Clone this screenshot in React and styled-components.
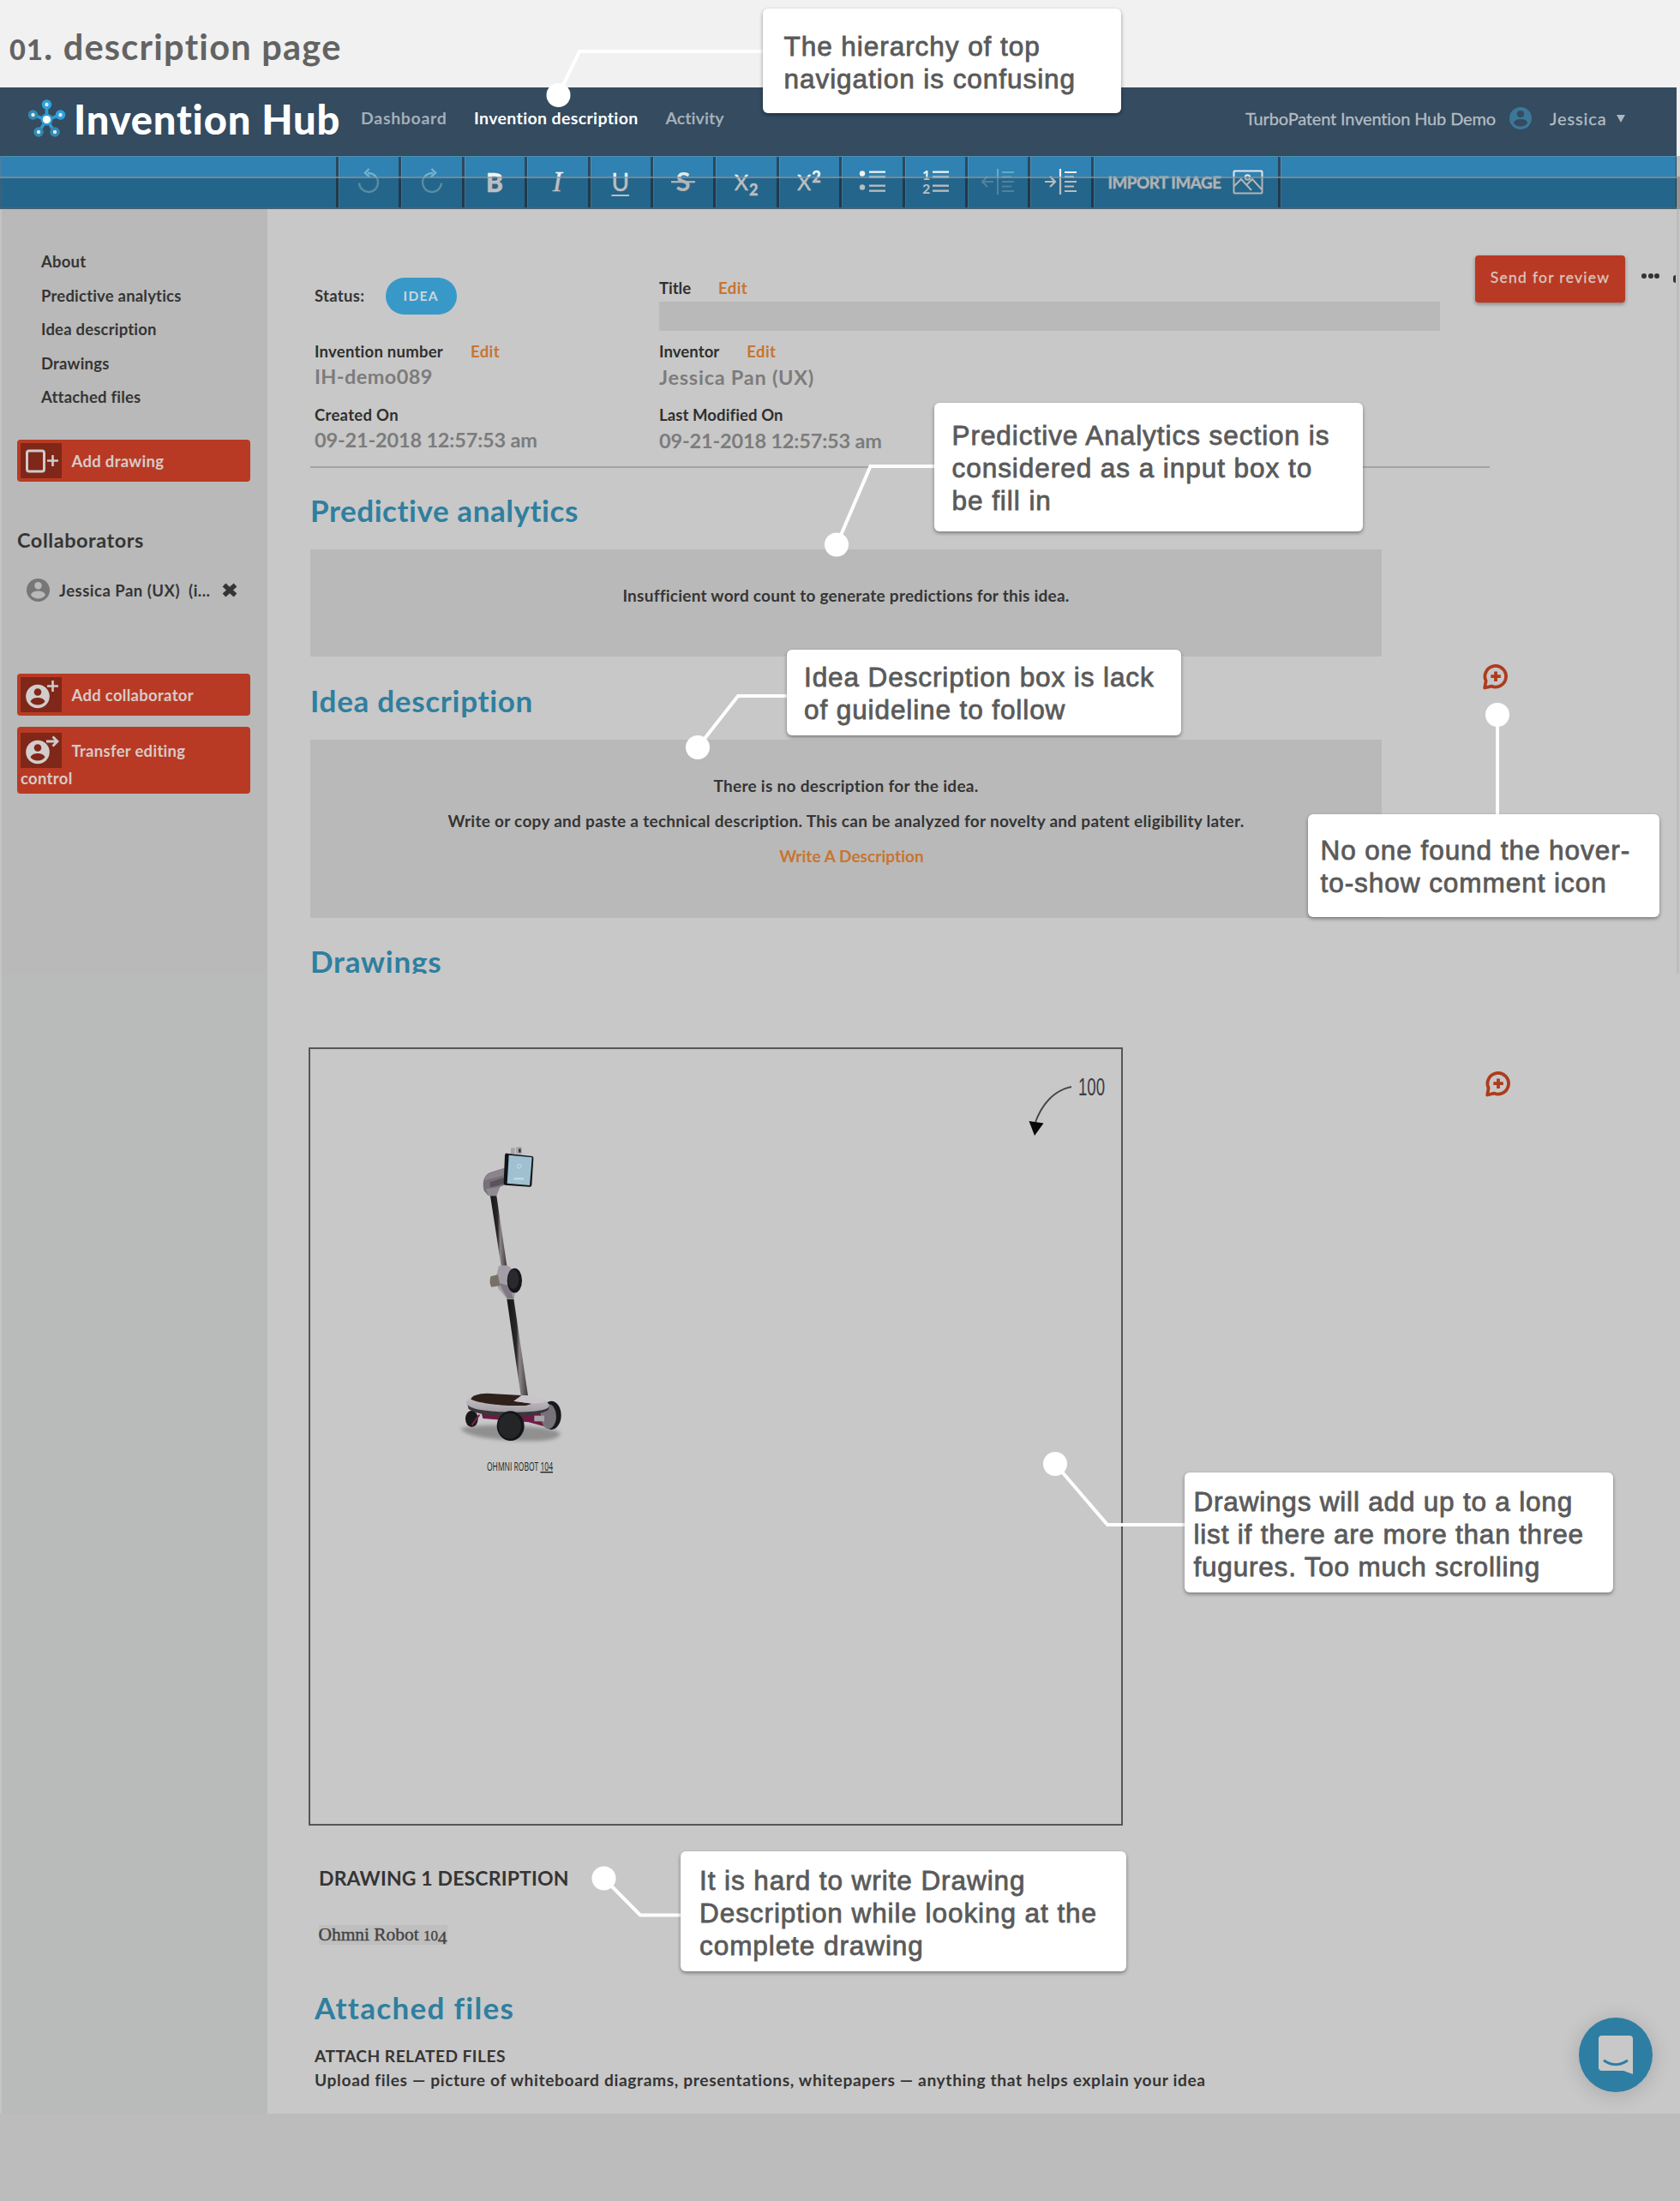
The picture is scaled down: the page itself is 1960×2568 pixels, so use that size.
import React from "react";
import styled, { createGlobalStyle } from "styled-components";

const Global = createGlobalStyle`
  * { box-sizing: border-box; }
  body { margin: 0; background: #bcbcbc; }
`;

const ui = `"Lato", "Open Sans", sans-serif`;

const Page = styled.div`
  position: relative;
  width: 1960px;
  height: 2568px;
  overflow: hidden;
  display: flex;
  flex-direction: column;
  background: #bcbcbc;
  color: #353535;
  font-family: ${ui};
  font-weight: 700;
  font-variant-ligatures: none;
`;

const TitleBar = styled.header`
  height: 102px;
  flex: none;
  background: #f1f1f1;
  padding: 29px 0 0 11px;
`;

const PageTitle = styled.h1`
  margin: 0;
  font-size: 41.5px;
  line-height: 50px;
  font-weight: 700;
  letter-spacing: ${(p) => p.$ls}px;
  color: #636363;
  white-space: nowrap;
`;

const OldStyle = styled.span`
  font-size: ${(p) => p.$size}px;
  font-weight: ${(p) => p.$weight || 400};
`;

const Descending = styled.span`
  position: relative;
  top: 4px;
`;

const TopNav = styled.nav`
  height: 80px;
  flex: none;
  width: 1956px;
  background: #344b60;
  display: flex;
  align-items: center;
  padding: 0 60px 8px 32px;
  box-shadow: 4px 0 0 #f1f1f1;
`;

const Brand = styled.div`
  display: flex;
  align-items: center;
  width: 389px;
`;

const BrandName = styled.span`
  margin-left: 9px;
  padding-top: 2px;
  font-size: 47px;
  line-height: 54px;
  font-weight: 900;
  letter-spacing: ${(p) => p.$ls}px;
  color: #fff;
  white-space: nowrap;
`;

const NavLink = styled.a`
  width: ${(p) => p.$w}px;
  font-size: 19.5px;
  line-height: 24px;
  letter-spacing: ${(p) => p.$ls || 0}px;
  color: ${(p) => (p.$active ? "#fff" : "#a3afb8")};
  white-space: nowrap;
`;

const Account = styled.div`
  margin-left: auto;
  display: flex;
  align-items: center;
  font-size: 20px;
  line-height: 24px;
  font-weight: 400;
  color: #b4bcc2;
  -webkit-text-stroke: 0.3px #b4bcc2;
  white-space: nowrap;
`;

const Org = styled.span`
  width: 308px;
  letter-spacing: ${(p) => p.$ls}px;
`;

const UserName = styled.span`
  margin-left: 21px;
  width: 78px;
  letter-spacing: 0.9px;
`;

const Caret = styled.i`
  border: 5.5px solid transparent;
  border-top: 9px solid #adb6bd;
  border-bottom: 0;
`;

const Toolbar = styled.div`
  position: relative;
  height: 62px;
  flex: none;
  width: 1956px;
  display: flex;
  background: #2f82b2;
  border-top: 1px solid #4a90b4;
  border-left: 2px solid #4a7f9f;
  border-bottom: 2px solid #5b7f92;
  &::after {
    content: "";
    position: absolute;
    left: -2px;
    right: -4px;
    top: 23px;
    bottom: -2px;
    background: rgba(0, 0, 0, 0.22);
    border-top: 2px solid rgba(152, 158, 162, 0.65);
  }
`;

const ToolSpacer = styled.div`
  width: 390px;
`;

const Tool = styled.button`
  width: ${(p) => p.$w || 73.4}px;
  padding: 0 0 1px;
  margin: 0;
  border: 0;
  border-left: 3px solid #2b4960;
  box-shadow: inset 1px 0 0 #4f92b5;
  background: none;
  color: #f2f4f5;
  display: flex;
  align-items: center;
  justify-content: center;
  font-family: ${ui};
`;

const Glyph = styled.span`
  font-size: ${(p) => p.$size || 29}px;
  line-height: 34px;
  font-family: ${(p) => p.$family || ui};
  font-weight: ${(p) => p.$weight || 400};
  font-style: ${(p) => (p.$italic ? "italic" : "normal")};
  text-decoration: ${(p) => p.$line || "none"};
  text-decoration-thickness: 2px;
  text-underline-offset: 4px;
  -webkit-text-stroke: 0.4px #f2f4f5;
  white-space: pre;
  sub, sup { font-size: 18px; line-height: 0; font-weight: 700; margin-left: 1px; }
`;

const ImportLabel = styled.span`
  font-size: 18.8px;
  font-weight: 700;
  letter-spacing: ${(p) => p.$ls}px;
  margin-right: 14px;
  color: #e2e6e8;
  -webkit-text-stroke: 0.4px #e2e6e8;
  white-space: nowrap;
`;

const ToolEnd = styled.div`
  flex: 1;
  border-left: 3px solid #2b4960;
  border-right: 1px solid #2b4960;
  box-shadow: inset 1px 0 0 #4f92b5;
`;

const Body = styled.div`
  display: flex;
  height: 2222px;
  flex: none;
  background: #c8c8c8;
`;

const Sidebar = styled.aside`
  width: 312px;
  flex: none;
  border-left: 2px solid #c4c4c4;
  background: linear-gradient(#b9b9b9 893px, #b8bbb9 893px);
  padding: 42px 20px 0 18px;
`;

const SideLink = styled.a`
  display: block;
  margin-left: 28px;
  height: 39.6px;
  line-height: 39.6px;
  font-size: 18.5px;
  letter-spacing: 0.2px;
`;

const SideTitle = styled.h3`
  margin: 54.5px 0 0;
  font-size: 23.5px;
  line-height: 28px;
  font-weight: 700;
  letter-spacing: ${(p) => p.$ls}px;
`;

const Person = styled.div`
  display: flex;
  align-items: center;
  height: 28px;
  margin: 30.5px 0 83px 11px;
  font-size: 18.5px;
  letter-spacing: ${(p) => p.$ls}px;
  white-space: pre;
  svg:first-child { margin-right: 11px; }
  svg:last-child { margin-left: 13px; }
`;

const RedButton = styled.button`
  display: block;
  width: 272px;
  height: ${(p) => p.$h || 49}px;
  margin: ${(p) => p.$mt || 0}px 0 0;
  padding: 4px;
  border: 0;
  border-radius: 4px;
  background: #b93a24;
  color: #d6cbc8;
  text-align: left;
  font-family: ${ui};
  font-size: 18.5px;
  font-weight: 700;
  letter-spacing: 0.3px;
`;

const ButtonRow = styled.span`
  display: flex;
  align-items: flex-start;
  height: 42px;
  line-height: 43px;
`;

const IconBox = styled.span`
  width: 48px;
  height: 41px;
  margin-right: 11.5px;
  background: #7f2718;
  display: flex;
`;

const WrapWord = styled.span`
  display: block;
  line-height: 24px;
  margin-top: -1px;
`;

const Main = styled.main`
  flex: 1;
  width: 1648px;
  margin-right: 2px;
  padding-left: 50px;
`;

const MetaRow = styled.div`
  display: flex;
  align-items: flex-start;
  height: 300px;
  padding-left: 5px;
`;

const MetaColumn = styled.div`
  width: ${(p) => p.$w}px;
  padding-top: ${(p) => p.$top}px;
`;

const StatusRow = styled.div`
  display: flex;
  align-items: center;
  height: 43px;
  margin-bottom: 30.5px;
  font-size: 18.5px;
`;

const Status = styled.span`
  width: 82.5px;
  padding-bottom: 1px;
  letter-spacing: 0.3px;
`;

const Pill = styled.span`
  width: 83.5px;
  height: 43px;
  border-radius: 22px;
  background: #3899c8;
  color: #c9d7de;
  font-size: 15.5px;
  letter-spacing: 1.3px;
  line-height: 43px;
  text-align: center;
`;

const Label = styled.div`
  display: flex;
  gap: 32px;
  height: 24px;
  line-height: 24px;
  font-size: 18.5px;
  letter-spacing: ${(p) => p.$ls || 0}px;
  color: #2f2f2f;
`;

const EditLink = styled.a`
  color: #c87530;
  letter-spacing: 0.4px;
`;

const Value = styled.div`
  margin: 3.5px 0 18.5px;
  height: 28px;
  line-height: 28px;
  font-size: 23.5px;
  letter-spacing: ${(p) => p.$ls || 0}px;
  color: #7c7c7c;
`;

const TitleField = styled.div`
  height: 34px;
  margin: 3.5px 0 12.5px;
  background: #b9b9b9;
`;

const Actions = styled.div`
  display: flex;
  align-items: center;
  margin: 54px 0 0 41px;
`;

const SendButton = styled.button`
  width: 175px;
  height: 55px;
  padding: 0 0 5px;
  border: 0;
  border-radius: 4px;
  background: #b93a24;
  box-shadow: 0 2px 4px rgba(0, 0, 0, 0.35);
  color: #d9c5bf;
  font-family: ${ui};
  font-size: 17.5px;
  -webkit-text-stroke: 0.3px #d9c5bf;
  letter-spacing: ${(p) => p.$ls}px;
  white-space: nowrap;
`;

const Dots = styled.span`
  display: flex;
  gap: 1.5px;
  margin: 0 16px 7px 19px;
  i { width: 6px; height: 6px; border-radius: 3px; background: #333; }
`;

const EdgeMark = styled.i`
  width: 3px;
  height: 9px;
  border-radius: 3px 0 0 3px;
  background: #3b3226;
`;

const Rule = styled.hr`
  margin: 0;
  border: 0;
  width: 1376px;
  height: 2px;
  background: #a4a4a4;
`;

const Heading = styled.h2`
  margin: ${(p) => p.$m};
  height: ${(p) => p.$h || 40}px;
  overflow: hidden;
  font-size: 35px;
  line-height: 40px;
  font-weight: 700;
  letter-spacing: ${(p) => p.$ls || 0}px;
  color: #2f7f9f;
`;

const WithComment = styled.div`
  display: flex;
  align-items: flex-start;
`;

const CommentButton = styled.span`
  display: flex;
  margin: ${(p) => p.$m};
`;

const Section = styled.section`
  width: 1250px;
`;

const EmptyBox = styled.div`
  width: 1250px;
  height: ${(p) => p.$h}px;
  padding-top: ${(p) => p.$top}px;
  background: #b9b9b9;
  display: flex;
  flex-direction: column;
  align-items: center;
  font-size: 19px;
  line-height: 41px;
`;

const Message = styled.span`
  padding-left: ${(p) => p.$left || 0}px;
  letter-spacing: ${(p) => p.$ls || 0}px;
  color: ${(p) => (p.$link ? "#c87530" : "#353535")};
  white-space: nowrap;
`;

const Canvas = styled.figure`
  width: 950px;
  height: 908px;
  margin: 0 0 0 -2px;
  border: 2px solid #565656;
  svg { display: block; }
`;

const Caption = styled.h4`
  margin: 46.5px 0 0 10px;
  font-size: 23px;
  line-height: 28px;
  letter-spacing: ${(p) => p.$ls}px;
`;

const Note = styled.p`
  margin: 41.5px 0 0 9.5px;
  width: max-content;
  height: 23px;
  background: #bfbfbf;
  font-family: "Liberation Serif", "DejaVu Serif", serif;
  font-weight: 400;
  font-size: 21.5px;
  line-height: 23px;
  letter-spacing: ${(p) => p.$ls}px;
  -webkit-text-stroke: 0.4px #444;
  color: #444;
`;

const FileLine = styled.div`
  margin-left: 5px;
  height: 28px;
  line-height: 28px;
  font-size: 19.2px;
  letter-spacing: ${(p) => p.$ls}px;
  white-space: nowrap;
`;

const Chat = styled.button`
  position: absolute;
  left: 1842px;
  top: 2354px;
  width: 86px;
  height: 87px;
  padding: 0;
  border: 0;
  border-radius: 50%;
  background: #2e7ea4;
  box-shadow: 0 3px 24px rgba(0, 0, 0, 0.16);
`;

const EdgeLine = styled.div`
  position: absolute;
  right: 1px;
  top: 244px;
  width: 3px;
  height: 892px;
  background: #bdbdbd;
`;

const Connectors = styled.svg`
  position: absolute;
  inset: 0;
`;

const Callout = styled.div`
  position: absolute;
  left: ${(p) => p.$x}px;
  top: ${(p) => p.$y}px;
  width: ${(p) => p.$w}px;
  height: ${(p) => p.$h}px;
  padding: ${(p) => p.$pt}px 0 0 ${(p) => p.$pl}px;
  border-radius: 6px;
  background: #fff;
  box-shadow: 0 2px 4px rgba(0, 0, 0, 0.4);
  font-family: "Liberation Sans", Arial, sans-serif;
  font-weight: 400;
  font-size: 31.5px;
  line-height: 38px;
  letter-spacing: ${(p) => p.$ls || 0}px;
  color: #5a5a5a;
  -webkit-text-stroke: 0.8px #5a5a5a;
  white-space: nowrap;
`;

const Logo = () => (
  <svg width="45" height="46" viewBox="0 0 45 46">
    <g stroke="#2f9bd0" strokeWidth="3.6">
      <path d="M22.500 25V7M22.500 25L6.500 19M22.500 25L38.500 19M22.500 25L13 39M22.500 25L32 39" />
    </g>
    <circle cx="22.5" cy="24.500" r="7" fill="#2f9bd0" />
    {[[22.5, 7], [6.5, 19], [38.5, 19], [13, 39], [32, 39]].map(([x, y], i) => (
      <g key={i}>
        <circle cx={x} cy={y} r="5.8" fill={i % 3 === 1 || i === 3 ? "#3388b0" : "#2ea0da"} />
        <circle cx={x} cy={y} r="2.2" fill="#dcebf2" />
      </g>
    ))}
    <circle cx="22.500" cy="24.500" r="4.6" fill="#fff" />
  </svg>
);

const Avatar = ({ size, fill, hole }) => (
  <svg width={size} height={size} viewBox="0 0 26 26">
    <circle cx="13" cy="13" r="13" fill={fill} />
    <circle cx="13" cy="8" r="4.100" fill={hole} />
    <path d="M4.800 18.500C6 14.700 10 14 13 14s7 .7 8.200 4.500C19.500 21 16.500 22.600 13 22.600S6.500 21 4.800 18.500Z" fill={hole} />
  </svg>
);

const Turn = ({ flip }) => (
  <svg width="28" height="32" viewBox="0 0 28 32" fill="none" stroke="#72b3d0" strokeWidth="2.4">
    <g transform={flip ? "translate(28 0) scale(-1 1)" : undefined}>
      <path d="M3 17.500a11 11 0 1 0 10-11.500" />
      <path d="M14.500 1L10 5.800l5.500 5" />
    </g>
  </svg>
);

const StrikeIcon = () => (
  <svg width="30" height="34" viewBox="0 0 30 34">
    <text x="15" y="27.500" textAnchor="middle" fontFamily="Lato" fontSize="31" fontWeight="700" fill="#e6eaec">S</text>
    <path d="M1 17.200h28" stroke="#e6eaec" strokeWidth="2.200" />
  </svg>
);

const ListIcon = ({ numbered }) => (
  <svg width="34" height="32" viewBox="0 0 34 32" fill="#f0f2f3">
    {numbered ? (
      <g fontFamily="Lato" fontWeight="700" fontSize="16">
        <text x="2" y="13.500">1</text>
        <text x="2" y="29.500">2</text>
      </g>
    ) : (
      <>
        <circle cx="6" cy="6.500" r="3.200" />
        <circle cx="6" cy="22.500" r="3.200" />
      </>
    )}
    {[3.5, 9.5, 19.5, 25.5].map((y) => <rect key={y} x="14" y={y} width="19" height="2.300" />)}
  </svg>
);

const IndentIcon = ({ out }) => (
  <svg width="42" height="32" viewBox="0 0 42 32" fill="none" stroke={out ? "#64a8c9" : "#eef1f2"} strokeWidth="2.200">
    {out ? <path d="M16 16H3M9 10l-6 6 6 6" /> : <path d="M3 16h12M9 10l6 6-6 6" />}
    <path d="M21 1v30M26 5h14M26 10.500h11M26 16h14M26 21.500h11M26 27h14" />
  </svg>
);

const PictureIcon = () => (
  <svg width="36" height="29" viewBox="0 0 36 29" fill="none" stroke="#e4e8ea" strokeWidth="2">
    <rect x="1.500" y="1.500" width="33" height="26" rx="1" />
    <circle cx="17.500" cy="9" r="2.800" />
    <path d="M2 19l8-8 12 13M17 17l6-6 11 12" />
  </svg>
);

const CommentIcon = () => (
  <svg width="30" height="31" viewBox="0 0 30 31" fill="none" stroke="#ad3c1d">
    <path d="M2.200 28.500L3.600 20.500A12.300 12.300 0 1 1 10 26.600Z" strokeWidth="3.800" strokeLinejoin="round" />
    <path d="M15 9.500v11.500M9.300 15.200h11.500" strokeWidth="3.800" />
  </svg>
);

const ButtonIcon = ({ kind }) => (
  <svg width="48" height="41" viewBox="0 0 48 41" fill="none" stroke="#cfcaca" strokeWidth="3">
    {kind === "drawing" ? (
      <>
        <rect x="7.500" y="9" width="20" height="24" rx="2.500" />
        <path d="M31 20.500h13M37.500 14v13" strokeWidth="2.600" />
      </>
    ) : (
      <>
        <g stroke="none">
          <circle cx="20" cy="22.500" r="13.800" fill="#d2cdcd" />
          <circle cx="20" cy="17.500" r="4.300" fill="#7f2718" />
          <path d="M11.500 28.500c1.500-3.700 5.500-4.500 8.500-4.500s7 .8 8.500 4.500c-1.800 2.600-5 4-8.500 4s-6.700-1.400-8.500-4Z" fill="#7f2718" />
        </g>
        {kind === "add"
          ? <path d="M31 10.500h13M37.500 4v13" strokeWidth="2.600" />
          : <path d="M30 10h12M37.500 4.500l5.500 5.500-5.500 5.500" strokeWidth="2.800" />}
      </>
    )}
  </svg>
);

const Robot = () => (
  <g transform="translate(138 76) scale(0.33333)">
    <defs>
      <linearGradient id="pole" x1="0" x2="1" y1="0" y2="0">
        <stop offset="0" stopColor="#151515" />
        <stop offset=".45" stopColor="#2a2829" />
        <stop offset=".6" stopColor="#8b8589" />
        <stop offset="1" stopColor="#3b383a" />
      </linearGradient>
      <linearGradient id="deck" x1="0" x2="0" y1="0" y2="1">
        <stop offset="0" stopColor="#cfcbcf" />
        <stop offset="1" stopColor="#a29da3" />
      </linearGradient>
      <filter id="soft" x="-20%" y="-60%" width="140%" height="220%">
        <feGaussianBlur stdDeviation="7" />
      </filter>
    </defs>
    <path d="M112 1100C160 1080 440 1085 462 1118C450 1150 340 1146 270 1140C200 1136 130 1125 112 1100Z" fill="#909090" filter="url(#soft)" />
    <path d="M288 118h14v20h-14zM306 115h20v24h-20z" fill="#a9a4aa" />
    <rect x="315" y="121" width="8" height="13" fill="#39363c" />
    <path d="M266 188L215 204C190 214 188 245 194 268L208 284L238 283L250 254L270 246Z" fill="#777078" />
    <path d="M266 190L215 206C203 211 197 222 196 232L262 214Z" fill="#8b848d" />
    <path d="M200 262L248 254L238 286L210 286Z" fill="#8f8991" />
    <path d="M214 238l50-16v22l-48 12z" fill="#5a535c" />
    <path d="M274 137L362 147Q368 148 367 155L361 248Q360 255 353 254L268 248Q262 247 263 240L267 143Q268 136 274 137Z" fill="#121318" />
    <path d="M281 143L362 151L354 249L275 242Z" fill="#9fc0d0" />
    <circle cx="317" cy="182" r="7" fill="none" stroke="#b9d2de" strokeWidth="4" />
    <path d="M298 226h35" stroke="#c4d9e2" strokeWidth="7" />
    <path d="M216 286L238 286L274 530L254 530Z" fill="url(#pole)" />
    <path d="M274 646L298 646L348 985L323 985Z" fill="url(#pole)" />
    <path d="M246 530L278 530L300 548L305 620L298 648L276 648L244 610L236 570Z" fill="#a39ea5" />
    <path d="M246 590L280 600L298 646L276 646Z" fill="#7f7982" />
    <path d="M218 567L243 562L250 600L220 605Q210 587 218 567Z" fill="#777067" />
    <ellipse cx="301" cy="582" rx="26" ry="43" fill="#16161a" />
    <ellipse cx="297" cy="578" rx="19" ry="34" fill="#292a2e" />
    <path d="M185 1045L390 1045L425 1098L350 1078L190 1065Z" fill="#6f1a46" />
    <ellipse cx="430" cy="1054" rx="34" ry="50" fill="#19191b" />
    <ellipse cx="420" cy="1058" rx="27" ry="43" fill="#777279" />
    <ellipse cx="151" cy="1066" rx="22" ry="29" fill="#19191b" />
    <path d="M152 1088L178 1052" stroke="#7a2450" strokeWidth="6" />
    <path d="M134 1005L140 1032Q180 1057 290 1060Q390 1056 420 1034L420 1015Z" fill="#3a373b" />
    <path d="M134 1012C132 990 152 978 180 978L330 984C385 988 422 1005 422 1020C420 1038 365 1043 290 1043C210 1042 138 1034 134 1012Z" fill="url(#deck)" />
    <path d="M148 998C152 984 172 978 205 977L325 984L298 1004L362 1013L340 1020C270 1022 185 1014 148 998Z" fill="#2e211b" />
    <path d="M332 984L298 1004L365 1013L410 1008C385 990 360 985 332 984Z" fill="#c8c4c9" />
    <path d="M370 1055h35v20h-35z" fill="#a8a3a9" />
    <ellipse cx="287" cy="1091" rx="48" ry="52" fill="#131415" />
    <ellipse cx="284" cy="1091" rx="40" ry="45" fill="#232526" />
  </g>
);

const callouts = [
  { x: 890, y: 10, w: 418, h: 122, pl: 24.5, pt: 25, ls: 0.95, lines: ["The hierarchy of top", "navigation is confusing"] },
  { x: 1090, y: 470, w: 500, h: 150, pl: 20.5, pt: 19, ls: 0.95, lines: ["Predictive Analytics section is", "considered as a input box to", "be fill in"] },
  { x: 918, y: 758, w: 460, h: 100, pl: 20, pt: 13, ls: 0.9, lines: ["Idea Description box is lack", "of guideline to follow"] },
  { x: 1526, y: 950, w: 410, h: 120, pl: 14.5, pt: 23, ls: 0.95, lines: ["No one found the hover-", "to-show comment icon"] },
  { x: 1382, y: 1718, w: 500, h: 140, pl: 10.5, pt: 15, ls: 0.8, lines: ["Drawings will add up to a long", "list if there are more than three", "fugures. Too much scrolling"] },
  { x: 794, y: 2160, w: 520, h: 140, pl: 22, pt: 15, ls: 0.93, lines: ["It is hard to write Drawing", "Description while looking at the", "complete drawing"] },
];

const pins = [
  { cx: 651.5, cy: 111, d: "M651.5 111L676 60H892" },
  { cx: 976, cy: 635.5, d: "M976 636L1015.5 544H1092" },
  { cx: 814, cy: 872, d: "M814 872L861 812H920" },
  { cx: 1747, cy: 834, d: "M1747 834V952" },
  { cx: 1231, cy: 1708, d: "M1231 1708L1292 1779H1384" },
  { cx: 704.5, cy: 2191.5, d: "M704 2191L747 2234.5H796" },
];

export default function App() {
  return (
    <Page>
      <Global />
      <TitleBar>
        <PageTitle $ls={1.25}><OldStyle $size={32.5} $weight={900}>01</OldStyle>. description page</PageTitle>
      </TitleBar>

      <TopNav>
        <Brand>
          <Logo />
          <BrandName $ls={0.85}>Invention Hub</BrandName>
        </Brand>
        <NavLink $w={132} $ls={0.7}>Dashboard</NavLink>
        <NavLink $w={223.5} $ls={0.37} $active>Invention description</NavLink>
        <NavLink $w={80} $ls={0.05}>Activity</NavLink>
        <Account>
          <Org $ls={-0.15}>TurboPatent Invention Hub Demo</Org>
          <Avatar size={26} fill="#3d7798" hole="#344b60" />
          <UserName>Jessica</UserName>
          <Caret />
        </Account>
      </TopNav>

      <Toolbar>
        <ToolSpacer />
        <Tool><Turn /></Tool>
        <Tool><Turn flip /></Tool>
        <Tool><Glyph $weight={900} $size={30}>B</Glyph></Tool>
        <Tool><Glyph $italic $size={33} $family={`"Liberation Serif", serif`}>I</Glyph></Tool>
        <Tool><Glyph $line="underline" $size={28}>U</Glyph></Tool>
        <Tool><StrikeIcon /></Tool>
        <Tool><Glyph $size={25}>X<sub>2</sub></Glyph></Tool>
        <Tool><Glyph $size={25}>X<sup>2</sup></Glyph></Tool>
        <Tool><ListIcon /></Tool>
        <Tool><ListIcon numbered /></Tool>
        <Tool><IndentIcon out /></Tool>
        <Tool><IndentIcon /></Tool>
        <Tool $w={218.500}>
          <ImportLabel $ls={-0.45}>IMPORT IMAGE</ImportLabel>
          <PictureIcon />
        </Tool>
        <ToolEnd />
      </Toolbar>

      <Body>
        <Sidebar>
          <SideLink>About</SideLink>
          <SideLink>Predictive analytics</SideLink>
          <SideLink>Idea description</SideLink>
          <SideLink>Drawings</SideLink>
          <SideLink>Attached files</SideLink>
          <RedButton $mt={29}>
            <ButtonRow><IconBox><ButtonIcon kind="drawing" /></IconBox>Add drawing</ButtonRow>
          </RedButton>
          <SideTitle $ls={0.55}>Collaborators</SideTitle>
          <Person $ls={0.5}>
            <Avatar size={27} fill="#777" hole="#b9b9b9" />
            {"Jessica Pan (UX)  (i..."}
            <svg width="18" height="17" viewBox="0 0 18 17" stroke="#353535" strokeWidth="5.500">
              <path d="M2.500 2.500l13 12M15.500 2.500l-13 12" />
            </svg>
          </Person>
          <RedButton>
            <ButtonRow><IconBox><ButtonIcon kind="add" /></IconBox>Add collaborator</ButtonRow>
          </RedButton>
          <RedButton $h={78} $mt={13.5}>
            <ButtonRow><IconBox><ButtonIcon kind="transfer" /></IconBox>Transfer editing</ButtonRow>
            <WrapWord>control</WrapWord>
          </RedButton>
        </Sidebar>

        <Main>
          <MetaRow>
            <MetaColumn $w={402} $top={80}>
              <StatusRow>
                <Status>Status:</Status>
                <Pill>IDEA</Pill>
              </StatusRow>
              <Label $ls={0.25}>Invention number <EditLink>Edit</EditLink></Label>
              <Value $ls={0.4}>IH-demo089</Value>
              <Label $ls={0.3}>Created On</Label>
              <Value $ls={-0.17}>09-21-2018 12:57:53 am</Value>
            </MetaColumn>
            <MetaColumn $w={911} $top={80}>
              <Label>Title <EditLink>Edit</EditLink></Label>
              <TitleField />
              <Label $ls={0.1}>Inventor <EditLink>Edit</EditLink></Label>
              <Value $ls={0.75}>Jessica Pan (UX)</Value>
              <Label $ls={0.1}>Last Modified On</Label>
              <Value $ls={-0.17}>09-21-2018 12:57:53 am</Value>
            </MetaColumn>
            <Actions>
              <SendButton $ls={1.3}>Send for review</SendButton>
              <Dots><i /><i /><i /></Dots>
              <EdgeMark />
            </Actions>
          </MetaRow>
          <Rule />

          <Heading $m="29px 0 26px 0px" $ls={0.55}>Predictive analytics</Heading>
          <EmptyBox $h={125} $top={33}>
            <Message $ls={0.25}>Insufficient word count to generate predictions for this idea.</Message>
          </EmptyBox>

          <WithComment>
            <Section>
              <Heading $m="30.5px 0 26px 0px" $ls={0.7}>Idea description</Heading>
              <EmptyBox $h={208.5} $top={33}>
                <Message $ls={0.3}>There is no description for the idea.</Message>
                <Message $ls={0.29}>Write or copy and paste a technical description. This can be analyzed for novelty and patent eligibility later.</Message>
                <Message $link $left={13} $ls={0.07}>Write A Description</Message>
              </EmptyBox>
            </Section>
            <CommentButton $m="8px 0 0 118px"><CommentIcon /></CommentButton>
          </WithComment>

          <Heading $m="30px 0 86px 0px" $h={35} $ls={0.75}>Drawings</Heading>
          <WithComment>
            <Canvas>
              <svg width="946" height="904" viewBox="0 0 946 904">
                <path d="M888 44C868 48 853 64 845 88" fill="none" stroke="#444" strokeWidth="1.800" />
                <path d="M838.500 84L855.500 86.500L845 101Z" fill="#080808" />
                <text x="896" y="54" fontFamily="Liberation Sans Narrow, Liberation Sans, sans-serif" fontSize="29" fontWeight="400" textLength="31" lengthAdjust="spacingAndGlyphs" fill="#3c3c44">100</text>
                <Robot />
                <text x="206" y="492" fontFamily="Open Sans, sans-serif" fontSize="14" fontWeight="400" textLength="77" lengthAdjust="spacingAndGlyphs" fill="#222">
                  OHMNI ROBOT <tspan textDecoration="underline">104</tspan>
                </text>
              </svg>
            </Canvas>
            <CommentButton $m="27px 0 0 423px"><CommentIcon /></CommentButton>
          </WithComment>

          <Caption $ls={0.15}>DRAWING 1 DESCRIPTION</Caption>
          <Note $ls={-0.05}>Ohmni Robot <OldStyle $size={17}>10</OldStyle><Descending>4</Descending></Note>

          <Heading $m="53px 0 22.5px 5px" $ls={1.3}>Attached files</Heading>
          <FileLine $ls={0.45}>ATTACH RELATED FILES</FileLine>
          <FileLine $ls={0.63}>Upload files — picture of whiteboard diagrams, presentations, whitepapers — anything that helps explain your idea</FileLine>
        </Main>
      </Body>

      <EdgeLine />
      <Chat>
        <svg width="86" height="87" viewBox="0 0 86 87">
          <path d="M27 21H59a4 4 0 0 1 4 4V66L52 62H27a4 4 0 0 1-4-4V25a4 4 0 0 1 4-4Z" fill="#c8c8c8" />
          <path d="M30 50.500Q43 59 56 50.500" fill="none" stroke="#2e7ea4" strokeWidth="3" strokeLinecap="round" />
        </svg>
      </Chat>

      <Connectors width="1960" height="2568" viewBox="0 0 1960 2568">
        {pins.map((p) => (
          <g key={p.d}>
            <path d={p.d} fill="none" stroke="#fff" strokeWidth="4" />
            <circle cx={p.cx} cy={p.cy} r="14" fill="#fff" />
          </g>
        ))}
      </Connectors>
      {callouts.map((c) => (
        <Callout key={c.y} $x={c.x} $y={c.y} $w={c.w} $h={c.h} $pl={c.pl} $pt={c.pt} $ls={c.ls}>
          {c.lines.map((l) => <div key={l}>{l}</div>)}
        </Callout>
      ))}
    </Page>
  );
}
